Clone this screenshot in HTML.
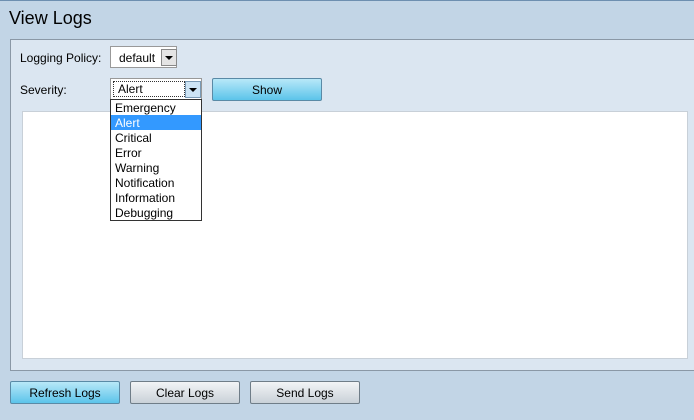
<!DOCTYPE html><html><head><style>
body{margin:0;width:694px;height:420px;background:#c2d5e6;font-family:"Liberation Sans",sans-serif;font-size:12px;position:relative;overflow:hidden;color:#000}
.a{position:absolute}
.btn{position:absolute;height:21px;border:1px solid #6f7d88;border-radius:2px;text-align:center;line-height:23px;font-size:12px;background:linear-gradient(#f2f4f6,#c9d1d8)}
.blue{background:linear-gradient(#b8e8f8,#5cc4ea);border-color:#5a8aa6}
</style></head><body>
<div class="a" style="left:0;top:0;width:694px;height:1px;background:#6d8fb0"></div>
<div class="a" style="left:9px;top:8px;font-size:18px">View Logs</div>
<div class="a" style="left:10px;top:39px;width:690px;height:330px;background:#dbe6f1;border:1px solid #8a98a6"></div>
<div class="a" style="left:20px;top:51px">Logging Policy:</div>
<div class="a" style="left:110px;top:46px;width:65px;height:20px;background:#fff;border:1px solid #999"><span class="a" style="left:8px;top:4px">default</span><div class="a" style="left:50px;top:2px;width:14px;height:15px;background:#e4e4e4;border:1px solid #888"><div class="a" style="left:3px;top:6px;border:4px solid transparent;border-top:4px solid #000;border-bottom:0"></div></div></div>
<div class="a" style="left:20px;top:83px">Severity:</div>
<div class="a" style="left:110px;top:78px;width:90px;height:20px;background:#fff;border:1px solid #999"><div class="a" style="left:2px;top:2px;width:70px;height:14px;border:1px dotted #333"></div><span class="a" style="left:7px;top:3px">Alert</span><div class="a" style="left:74px;top:2px;width:14px;height:15px;background:#cde4f5;border:1px solid #7a9ab5"><div class="a" style="left:3px;top:6px;border:4px solid transparent;border-top:4px solid #000;border-bottom:0"></div></div></div>
<div class="btn blue" style="left:212px;top:78px;width:108px;">Show</div>
<div class="a" style="left:22px;top:111px;width:664px;height:246px;background:#fff;border:1px solid #c8d0d8"></div>
<div class="a" style="left:110px;top:99px;width:90px;height:120px;background:#fff;border:1px solid #333;line-height:15px">
<div style="padding-left:4px;padding-top:1px;height:14px">Emergency</div><div style="padding-left:4px;background:#3399ff;color:#fff;padding-top:1px;height:14px">Alert</div><div style="padding-left:4px;padding-top:1px;height:14px">Critical</div><div style="padding-left:4px;padding-top:1px;height:14px">Error</div><div style="padding-left:4px;padding-top:1px;height:14px">Warning</div><div style="padding-left:4px;padding-top:1px;height:14px">Notification</div><div style="padding-left:4px;padding-top:1px;height:14px">Information</div><div style="padding-left:4px;padding-top:1px;height:14px">Debugging</div></div>
<div class="btn blue" style="left:10px;top:381px;width:108px;">Refresh Logs</div>
<div class="btn" style="left:130px;top:381px;width:108px;">Clear Logs</div>
<div class="btn" style="left:250px;top:381px;width:108px;">Send Logs</div>
</body></html>
